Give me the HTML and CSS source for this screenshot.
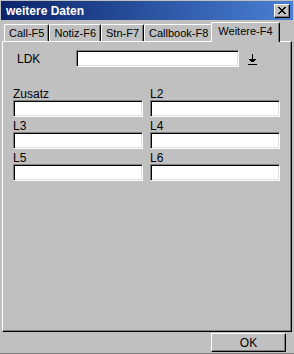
FILE: index.html
```html
<!DOCTYPE html>
<html lang="de">
<head>
    <meta charset="UTF-8">
    <meta name="viewport" content="width=device-width, initial-scale=1.0">
    <title>weitere Daten</title>
    <link rel="stylesheet" href="styles.css">
</head>
<body>
    <div class="window">
        <!-- Title bar -->
        <div class="titlebar">
            <span class="title">weitere Daten</span>
            <button class="close">
                <svg width="8" height="7" viewBox="0 0 8 7">
                    <path d="M0 0h2v1h-2zM6 0h2v1h-2zM1 1h2v1h-2zM5 1h2v1h-2zM2 2h4v1h-4zM3 3h2v1h-2zM2 4h4v1h-4zM1 5h2v1h-2zM5 5h2v1h-2zM0 6h2v1h-2zM6 6h2v1h-2z" fill="#000"/>
                </svg>
            </button>
        </div>

        <!-- Tabs -->
        <div class="tabs">
            <div class="tab">Call-F5</div>
            <div class="tab">Notiz-F6</div>
            <div class="tab">Stn-F7</div>
            <div class="tab">Callbook-F8</div>
            <div class="tab active">Weitere-F4</div>
        </div>

        <!-- Panel -->
        <div class="panel">
            <div class="ldk-row">
                <span class="ldk-label">LDK</span>
                <input type="text" class="field ldk-input">
                <svg class="ldk-icon" width="9" height="12" viewBox="0 0 9 12">
                    <path d="M4 0h1v7h-1z M1 5h7v1h-7z M2 6h5v1h-5z M3 7h3v1h-3z M0 10h9v1h-9z" fill="#000"/>
                </svg>
            </div>

            <div class="fields">
                <div class="cell">
                    <label>Zusatz</label>
                    <input type="text" class="field">
                </div>
                <div class="cell">
                    <label>L2</label>
                    <input type="text" class="field">
                </div>
                <div class="cell">
                    <label>L3</label>
                    <input type="text" class="field">
                </div>
                <div class="cell">
                    <label>L4</label>
                    <input type="text" class="field">
                </div>
                <div class="cell">
                    <label>L5</label>
                    <input type="text" class="field">
                </div>
                <div class="cell">
                    <label>L6</label>
                    <input type="text" class="field">
                </div>
            </div>
        </div>

        <!-- Footer -->
        <div class="footer">
            <button class="ok">OK</button>
        </div>
    </div>
</body>
</html>
```

FILE: styles.css
```css
body {
    margin: 0;
    background-color: #c0c0c0;
    font-family: "Liberation Sans", Arial, sans-serif;
    font-size: 11px;
    color: #000;
}

.window {
    width: 294px;
    height: 354px;
    box-sizing: border-box;
    padding: 1px;
    background-color: #c0c0c0;
    border-bottom: 1px solid #808080;
}

.titlebar {
    height: 19px;
    display: flex;
    align-items: center;
    justify-content: space-between;
    padding: 0 3px 0 5px;
    background: linear-gradient(to right, #0a246a, #4a80d4);
}

.title {
    color: white;
    font-weight: bold;
    font-size: 12px;
}

.close {
    width: 16px;
    height: 14px;
    padding: 0;
    display: flex;
    align-items: center;
    justify-content: center;
    background-color: #c0c0c0;
    border: 1px solid;
    border-color: #fff #000 #000 #fff;
    box-shadow: inset -1px -1px #808080;
}

.tabs {
    display: flex;
    align-items: flex-end;
    height: 19px;
    margin-top: 2px;
    padding-left: 3px;
    position: relative;
    z-index: 1;
}

.tab {
    height: 16px;
    line-height: 16px;
    padding: 0 4px;
    font-size: 11px;
    border-top: 1px solid #fff;
    border-left: 1px solid #fff;
    border-right: 1px solid #000;
    box-shadow: inset -1px 0 #808080;
    border-radius: 2px 2px 0 0;
    background-color: #c0c0c0;
}

.tab.active {
    margin: 0 -2px -1px -2px;
    padding: 0 6px;
    box-sizing: border-box;
    height: 20px;
    line-height: 17px;
}

.panel {
    height: 291px;
    box-sizing: border-box;
    margin-left: 1px;
    width: 290px;
    border: 1px solid;
    border-color: #fff #000 #000 #fff;
    box-shadow: inset -1px -1px #808080;
    padding: 8px 10px 0 11px;
}

.ldk-row {
    display: flex;
    align-items: center;
    height: 17px;
}

.ldk-label {
    width: 59px;
    padding-left: 3px;
    font-size: 12px;
}

.field {
    display: block;
    box-sizing: border-box;
    height: 17px;
    margin: 0;
    padding: 0 2px;
    background-color: #fff;
    border: 1px solid;
    border-color: #808080 #fff #fff #808080;
    box-shadow: inset 1px 1px #000, inset -1px -1px #dfdfdf;
    outline: none;
}

.ldk-input {
    width: 163px;
}

.ldk-icon {
    margin-left: 9px;
    margin-top: 3px;
}

.fields {
    display: grid;
    grid-template-columns: 130px 130px;
    column-gap: 7px;
    row-gap: 2px;
    margin-top: 20px;
    margin-left: -1px;
}

.cell label {
    display: block;
    height: 13px;
    line-height: 14px;
    font-size: 12px;
}

.cell .field {
    width: 130px;
}

.footer {
    display: flex;
    justify-content: flex-end;
    padding: 1px 7px 0 0;
}

.ok {
    width: 75px;
    height: 19px;
    padding: 0;
    font-family: "Liberation Sans", Arial, sans-serif;
    font-size: 12px;
    background-color: #c0c0c0;
    border: 1px solid;
    border-color: #fff #000 #000 #fff;
    box-shadow: inset -1px -1px #808080;
}
```
